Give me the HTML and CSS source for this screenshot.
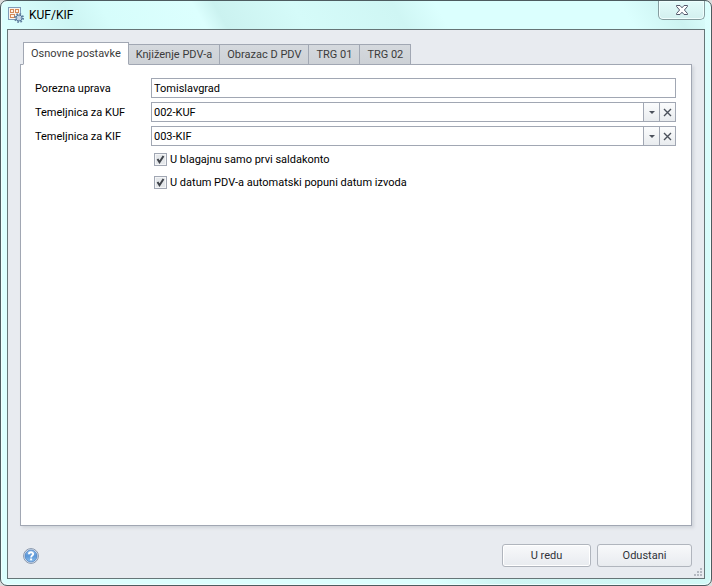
FILE: index.html
```html
<!DOCTYPE html>
<html lang="hr">
<head>
<meta charset="UTF-8" />
<title>KUF/KIF</title>
<link rel="stylesheet" href="styles.css">
</head>
<body>

<div class="window">

  <header class="titlebar">
    <svg class="app-icon" width="16" height="16" viewBox="0 0 16 16">
      <rect x="0.5" y="0.5" width="12" height="12" fill="#fbf3ea" stroke="#7f9cb8" />
      <g fill="#fff3e6" stroke="#d48a58">
        <rect x="2.5" y="2.5" width="3" height="3" />
        <rect x="7.5" y="2.5" width="3" height="3" />
        <rect x="2.5" y="7.5" width="4" height="3" />
      </g>
      <circle cx="11" cy="11" r="4" fill="none" stroke="#5f7f9e" stroke-width="2" stroke-dasharray="1.6 1.54" />
      <circle cx="11" cy="11" r="3" fill="#c5d9ea" stroke="#56799b" />
      <circle cx="11" cy="11" r="1.2" fill="#fff" stroke="#7f9cb8" stroke-width="0.5" />
    </svg>
    <h1>KUF/KIF</h1>
    <button type="button" class="close" aria-label="Zatvori">
      <svg width="12" height="10" viewBox="0 0 12 10">
        <path d="M0.5 0.5H4L6 2.8L8 0.5H11.5V1.4L8.4 5L11.5 8.6V9.5H8L6 7.2L4 9.5H0.5V8.6L3.6 5L0.5 1.4Z" fill="#fff" stroke="#53586b" />
      </svg>
    </button>
  </header>

  <form class="client">

    <div class="tabs" role="tablist">
      <button type="button" role="tab" class="tab active" aria-selected="true">Osnovne postavke</button>
      <button type="button" role="tab" class="tab">Knjiženje PDV-a</button>
      <button type="button" role="tab" class="tab">Obrazac D PDV</button>
      <button type="button" role="tab" class="tab">TRG 01</button>
      <button type="button" role="tab" class="tab">TRG 02</button>
    </div>

    <div class="panel" role="tabpanel">
      <div class="row">
        <label for="uprava">Porezna uprava</label>
        <input type="text" id="uprava" class="field" value="Tomislavgrad">
      </div>

      <div class="row">
        <label for="kuf">Temeljnica za KUF</label>
        <div class="field combo">
          <select id="kuf"><option>002-KUF</option></select>
          <span class="arrow"></span>
          <button type="button" class="clear" aria-label="Obriši">
            <svg width="9" height="9" viewBox="0 0 9 9"><path d="M1 1L8 8M8 1L1 8" stroke="#4b515b" stroke-width="1.4" /></svg>
          </button>
        </div>
      </div>

      <div class="row">
        <label for="kif">Temeljnica za KIF</label>
        <div class="field combo">
          <select id="kif"><option>003-KIF</option></select>
          <span class="arrow"></span>
          <button type="button" class="clear" aria-label="Obriši">
            <svg width="9" height="9" viewBox="0 0 9 9"><path d="M1 1L8 8M8 1L1 8" stroke="#4b515b" stroke-width="1.4" /></svg>
          </button>
        </div>
      </div>

      <div class="checks">
        <label><input type="checkbox" checked>U blagajnu samo prvi saldakonto</label>
        <label><input type="checkbox" checked>U datum PDV-a automatski popuni datum izvoda</label>
      </div>
    </div>

    <footer class="footer">
      <button type="button" class="help" aria-label="Pomoć">
        <svg width="16" height="16" viewBox="0 0 16 16">
          <defs>
            <linearGradient id="ball" x1="0" y1="0" x2="0" y2="1">
              <stop offset="0" stop-color="#8fbdec" />
              <stop offset="0.5" stop-color="#5b97d8" />
              <stop offset="1" stop-color="#8cc0ee" />
            </linearGradient>
          </defs>
          <circle cx="8" cy="8" r="7.4" fill="#eef4fb" stroke="#8493aa" stroke-width="1" />
          <circle cx="8" cy="8" r="6" fill="url(#ball)" stroke="#4b7fc0" stroke-width="0.8" />
          <path d="M5.9 6.2C5.9 3.6 10.2 3.6 10.2 6.1C10.2 7.6 8.1 7.6 8.1 9.4" fill="none" stroke="#fff" stroke-width="1.8" />
          <rect x="7.1" y="10.5" width="2" height="1.8" fill="#fff" />
        </svg>
      </button>
      <button type="submit" class="btn default">U redu</button>
      <button type="button" class="btn">Odustani</button>
    </footer>

    <svg class="grip" width="8" height="8" viewBox="0 0 8 8" fill="#b4b9c1">
      <path d="M6 0h2v2h-2zM3 3h2v2h-2zM6 3h2v2h-2zM0 6h2v2h-2zM3 6h2v2h-2zM6 6h2v2h-2z" />
    </svg>
  </form>

</div>

</body>
</html>
```

FILE: styles.css
```css
* {
  box-sizing: border-box;
}
body {
  margin: 0;
  background-color: #dcdcdc;
  font-family: Tahoma, Roboto, sans-serif;
  font-size: 11px;
  color: #000;
}
button, input, select {
  font: inherit;
  color: inherit;
  margin: 0;
}
button {
  padding: 0;
}
svg {
  display: block;
}

/* window frame */
.window {
  display: flex;
  flex-direction: column;
  min-height: 100vh;
  padding: 0 6px 6px;
  border: 1px solid #4d5c60;
  border-radius: 7px;
  background: linear-gradient(75deg, #dcfffe 0, #dcfffe 50%, #cff5f3 58%, #d2f8f6 80%, #dcfffe 100%);
  box-shadow: inset 0 0 0 1px #effffe;
}
.titlebar {
  display: flex;
  align-items: center;
  gap: 5px;
  height: 28px;
  padding-left: 1px;
  background: linear-gradient(60deg, #dcfffe 0, #cdf5f3 10%, #d6fdfb 15%, #dcfffe 28%, #cbf2f0 31%, #d5fbf9 42%, #cff6f4 56%, #dbfffe 62%, #dbfffe 88%, #cdf3f1 95%, #dcfffe 100%);
}
.titlebar h1 {
  flex: 1;
  margin: 0;
  font-size: 12px;
  font-weight: normal;
}
.close {
  display: flex;
  align-self: flex-start;
  align-items: center;
  justify-content: center;
  width: 47px;
  height: 19px;
  border: 1px solid #869c9f;
  border-top: 0;
  border-radius: 0 0 5px 5px;
  background: linear-gradient(#e3fbfa, #d3f0ef);
  box-shadow: inset 0 0 0 1px #effffe;
}

/* client area */
.client {
  position: relative;
  flex: 1;
  display: flex;
  flex-direction: column;
  padding: 12px;
  padding-bottom: 11px;
  border: 1px solid #667577;
  background-color: #e8ebf0;
}
.tabs {
  display: flex;
  align-items: flex-end;
  height: 23px;
  padding-left: 3px;
}
.tab {
  height: 21px;
  margin-left: -1px;
  padding: 0 7px;
  border: 1px solid #a1a7b3;
  background: linear-gradient(#d5d9de, #cdd1d6);
  color: #3b3b3b;
}
.tab.active {
  z-index: 1;
  height: 23px;
  margin-left: 0;
  border-bottom-color: #fff;
  background: #fff;
}
.panel {
  flex: 1;
  display: flex;
  flex-direction: column;
  gap: 4px;
  margin-top: -1px;
  padding: 13px 15px 13px 14px;
  border: 1px solid #a1a7b3;
  background-color: #fff;
  box-shadow: 2px 2px 3px #d0d4da;
}

/* form rows */
.row {
  display: grid;
  grid-template-columns: 116px 1fr;
  align-items: center;
}
.field {
  width: 100%;
  height: 20px;
  padding: 0 2px;
  border: 1px solid #a1a7b3;
  border-radius: 0;
  background-color: #fff;
}
.combo {
  display: grid;
  grid-template-columns: 1fr 16px 16px;
  padding: 0;
}
.combo select {
  grid-area: 1 / 1 / 2 / 3;
  appearance: none;
  padding: 0 2px;
  border: 0;
  background: none;
}
.arrow, .clear {
  display: flex;
  align-items: center;
  justify-content: center;
  border: 0;
  border-left: 1px solid #a1a7b3;
  background: linear-gradient(#fbfcfd, #e9ecef);
}
.arrow {
  grid-area: 1 / 2 / 2 / 3;
  pointer-events: none;
}
.arrow::before {
  content: "";
  border: 3px solid transparent;
  border-top-color: #4b515b;
  border-bottom: 0;
}
.checks {
  display: flex;
  flex-direction: column;
  align-items: flex-start;
  gap: 9px;
  margin: 2px 0 0 119px;
}
.checks label {
  display: flex;
  align-items: center;
  gap: 3px;
  height: 14px;
}
.checks input {
  appearance: none;
  width: 13px;
  height: 13px;
  border: 1px solid #a1a7b3;
  background: #e4e7ea url("data:image/svg+xml,%3Csvg xmlns='http://www.w3.org/2000/svg' viewBox='0 0 11 11'%3E%3Cpath d='M2.5 5L4.5 8.2L8.5 2' fill='none' stroke='%233f434a' stroke-width='2'/%3E%3C/svg%3E");
  box-shadow: inset 0 0 0 1px #f4f5f7;
}
.checks input:not(:checked) {
  background-image: none;
}

/* buttons */
.footer {
  display: flex;
  align-items: center;
  gap: 6px;
  margin-top: 18px;
  padding-left: 3px;
}
.help {
  margin-right: auto;
  border: 0;
  background: none;
}
.btn {
  width: 95px;
  height: 23px;
  border: 1px solid #b0b5bd;
  border-radius: 3px;
  background: linear-gradient(#f8f9fb, #e8ebef);
  color: #30323a;
}
.btn.default {
  width: 89px;
  box-shadow: inset 0 0 0 1px #fff;
}
.grip {
  position: absolute;
  right: 2px;
  bottom: 2px;
}
```
